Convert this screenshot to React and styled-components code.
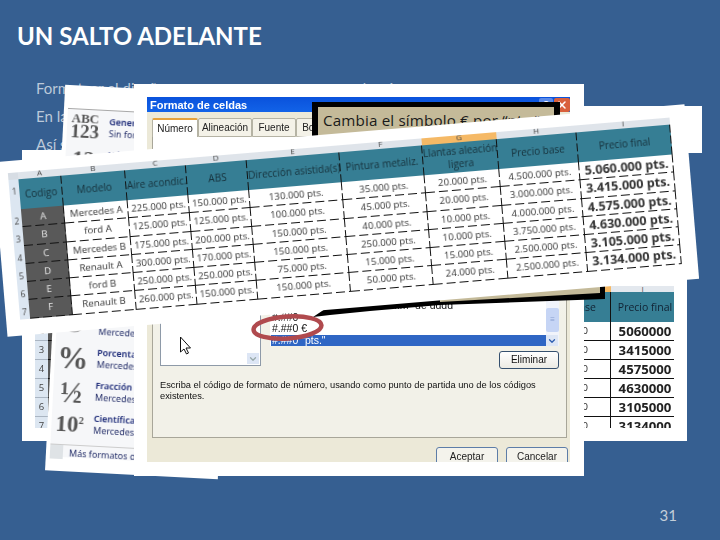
import { Fragment } from 'react';
import { createGlobalStyle, styled } from 'styled-components';
import { ChevronDown, X } from 'lucide-react';

const GlobalStyle = createGlobalStyle`
  html, body {
    margin: 0;
    padding: 0;
  }
  body {
    width: 720px;
    height: 540px;
    overflow: hidden;
    background: #365f91;
  }
`;

const Slide = styled.div`
  position: relative;
  width: 720px;
  height: 540px;
  overflow: hidden;
  background: #365f91;
  font-family: Lato, "Open Sans", sans-serif;
`;

const SlideTitle = styled.h1`
  margin: 0;
  padding: 22px 0 0 17px;
  height: 32px;
  font-size: 24px;
  line-height: 28px;
  font-weight: 700;
  color: #fff;
`;

const BodyText = styled.div`
  display: flex;
  flex-direction: column;
  gap: 8px;
  padding: 24px 0 0 36px;
`;

const BodyLine = styled.div`
  height: 20px;
  font-size: 15px;
  line-height: 20px;
  color: #bcc9d9;
  white-space: nowrap;
`;

const GapWord = styled.span`
  margin-left: 192px;
`;

const PageNumber = styled.div`
  position: absolute;
  right: 43px;
  bottom: 15px;
  font-size: 15px;
  line-height: 20px;
  color: #c3ced9;
`;

/* sheet behind everything, only its two ends show */
const BackSheet = styled.div`
  position: absolute;
  left: 22px;
  top: 150px;
  width: 665px;
  height: 291px;
  box-sizing: border-box;
  padding: 136px 13px 13px 13px;
  background: #fff;
  overflow: hidden;
  font-family: "Open Sans", sans-serif;
`;

const BackGrid = styled.div`
  display: grid;
  grid-template-columns: 13px 40px 1fr 91px 63px;
  grid-template-rows: 6px 30px;
  grid-auto-rows: 19px;
  height: 142px;
  overflow: hidden;
  filter: blur(0.35px);
`;

const BackLetter = styled.div`
  background: ${(p) => (p.$active ? '#f5b966' : '#e3e8ee')};
  font-size: 8px;
  line-height: 5px;
  text-align: center;
  color: #555;
  overflow: hidden;
`;

const BackHead = styled.div`
  background: ${(p) => (p.$blank ? '#dce6f1' : '#367e94')};
  color: #123;
  font-size: 10.5px;
  line-height: 30px;
  white-space: nowrap;
  text-align: ${(p) => p.$align || 'center'};
  padding-right: ${(p) => p.$pad || 0}px;
  padding-left: ${(p) => p.$left || 0}px;
  border-right: ${(p) => (p.$line ? '1px solid #111' : '0')};
`;

const BackRowNum = styled.div`
  background: #dce6f1;
  border-bottom: 1px solid #aab5c2;
  font-size: 9.5px;
  line-height: 18px;
  text-align: center;
  color: #444;
`;

const BackCell = styled.div`
  background: ${(p) => (p.$dark ? '#595959' : '#fff')};
  border-bottom: 1px solid #111;
  border-right: ${(p) => (p.$line ? '1px solid #111' : '0')};
  font-size: ${(p) => (p.$bold ? '13.2px' : '9.5px')};
  font-weight: ${(p) => (p.$bold ? 700 : 400)};
  line-height: 18px;
  color: #222;
  text-align: ${(p) => p.$align || 'center'};
  padding-right: ${(p) => p.$pad || 0}px;
  padding-left: ${(p) => p.$left || 0}px;
`;

/* number format dropdown from the ribbon */
const MenuPanel = styled.div`
  position: absolute;
  left: 55px;
  top: 89px;
  width: 173px;
  height: 386px;
  box-sizing: border-box;
  padding: 23px 8px 15px 4px;
  background: #fff;
  transform: rotate(3deg);
  font-family: "Noto Sans", sans-serif;
`;

const MenuList = styled.div`
  display: flex;
  flex-direction: column;
  height: 100%;
  background: #f6f7f9;
  border-top: 1px solid #a8a8a8;
  filter: blur(0.35px);
`;

const MenuItem = styled.div`
  display: flex;
  align-items: center;
  gap: 8px;
  height: 33px;
  flex-shrink: 0;
  padding-left: 2px;
`;

const MenuIcon = styled.div`
  width: 32px;
  flex-shrink: 0;
  padding-top: ${(p) => p.$drop || 0}px;
  text-align: center;
  font-family: "Liberation Serif", serif;
  font-weight: 700;
  color: #555;
  font-size: ${(p) => p.$size || 30}px;
  line-height: 0.85;
  white-space: nowrap;
  sup {
    font-size: 0.45em;
    vertical-align: 0.8em;
    line-height: 0;
  }
`;

const MenuText = styled.div`
  font-size: 9px;
  line-height: 12px;
  color: #26306a;
  white-space: nowrap;
  b {
    display: block;
    font-weight: 600;
    color: #1c2a78;
  }
`;

const MoreFormats = styled.div`
  display: flex;
  align-items: center;
  gap: 6px;
  margin-top: 5px;
  height: 20px;
  border-top: 1px solid #ccc;
  font-size: 9px;
  color: #26306a;
  white-space: nowrap;
`;

const MoreIcon = styled.div`
  width: 13px;
  height: 14px;
  background: #dfe3e6;
`;

/* Formato de celdas window */
const DialogPanel = styled.div`
  position: absolute;
  left: 134px;
  top: 84px;
  width: 450px;
  height: 392px;
  box-sizing: border-box;
  padding: 13px 14px 14px 13px;
  background: #fff;
  font-family: "Liberation Sans", sans-serif;
`;

const Dialog = styled.div`
  display: flex;
  flex-direction: column;
  height: 100%;
  background: #ece9d8;
  overflow: hidden;
  filter: blur(0.3px);
`;

const TitleBar = styled.div`
  display: flex;
  align-items: center;
  justify-content: space-between;
  height: 15px;
  flex-shrink: 0;
  padding-left: 3px;
  background: linear-gradient(#0a52dc, #1263e8);
  color: #fff;
  font-size: 11px;
  font-weight: 700;
`;

const WindowButtons = styled.div`
  display: flex;
  gap: 1px;
`;

const WindowButton = styled.div`
  display: flex;
  align-items: center;
  justify-content: center;
  width: ${(p) => (p.$close ? 16 : 14)}px;
  height: 14px;
  border-radius: 2px;
  background: ${(p) => (p.$close ? '#d9603c' : '#5b8ae8')};
  color: #fff;
`;

const TabRow = styled.div`
  display: flex;
  height: 19px;
  padding: 6px 0 0 5px;
  flex-shrink: 0;
`;

const Tab = styled.div`
  width: ${(p) => p.$w}px;
  box-sizing: border-box;
  text-align: center;
  font-size: 10px;
  line-height: 18px;
  color: #222;
  background: ${(p) => (p.$active ? '#fff' : '#f4f2e8')};
  border: 1px solid #b5b3a4;
  border-bottom: ${(p) => (p.$active ? '0' : '1px solid #b5b3a4')};
  border-top: ${(p) => (p.$active ? '2px solid #e6a23c' : '1px solid #b5b3a4')};
  border-radius: 2px 2px 0 0;
`;

const TabPane = styled.div`
  display: flex;
  flex-direction: column;
  justify-content: flex-end;
  height: 301px;
  flex-shrink: 0;
  box-sizing: border-box;
  margin: 0 3px 0 5px;
  padding: 0 7px 35px 7px;
  background: linear-gradient(#fff 20%, #f2f1e8 60%);
  border: 1px solid #a8a699;
  border-top: 0;
`;

const PaneRow = styled.div`
  display: flex;
  align-items: flex-start;
  gap: 9px;
`;

const CategoryList = styled.div`
  display: flex;
  align-items: flex-end;
  justify-content: flex-end;
  width: 101px;
  height: 140px;
  flex-shrink: 0;
  box-sizing: border-box;
  background: #fff;
  border: 1px solid #8e9aa8;
  padding: 0 1px 1px 0;
`;

const ArrowBox = styled.div`
  display: flex;
  align-items: center;
  justify-content: center;
  width: 12px;
  height: 11px;
  background: #dde6f5;
  color: ${(p) => p.$color || '#9aa'};
`;

const RightColumn = styled.div`
  display: flex;
  flex-direction: column;
  align-items: flex-end;
  gap: 5px;
  width: 290px;
`;

const FormatList = styled.div`
  display: flex;
  width: 100%;
  height: 120px;
  background: #fff;
`;

const FormatRows = styled.div`
  flex: 1;
  display: flex;
  flex-direction: column;
  justify-content: flex-end;
  min-width: 0;
  padding-left: 1px;
`;

const FormatRow = styled.div`
  height: 11.5px;
  font-size: 10.5px;
  line-height: 11px;
  padding-left: 1px;
  white-space: nowrap;
  overflow: hidden;
  color: ${(p) => (p.$selected ? '#fff' : '#111')};
  background: ${(p) => (p.$selected ? '#2f66c4' : 'transparent')};
`;

const ScrollBar = styled.div`
  display: flex;
  flex-direction: column;
  justify-content: flex-end;
  gap: 3px;
  width: 13px;
  background: #f1f4fb;
`;

const ScrollThumb = styled.div`
  display: flex;
  align-items: center;
  justify-content: center;
  height: 24px;
  background: #c6d5f5;
  color: #8aa0d0;
  font-size: 8px;
  line-height: 1;
  border-radius: 2px;
`;

const DeleteButton = styled.div`
  width: 60px;
  height: 18px;
  box-sizing: border-box;
  border: 1px solid #35506e;
  border-radius: 3px;
  background: linear-gradient(#fff, #ecebe4);
  font-size: 10px;
  line-height: 16px;
  text-align: center;
  color: #111;
`;

const HelpText = styled.p`
  margin: 11px 0 0;
  font-size: 9.3px;
  line-height: 11px;
  white-space: nowrap;
  color: #111;
`;

const DialogFooter = styled.div`
  display: flex;
  justify-content: flex-end;
  gap: 8px;
  padding: 9px 2px 0 0;
`;

const FooterButton = styled.div`
  width: 62px;
  height: 20px;
  box-sizing: border-box;
  border: 1px solid #5d7da8;
  border-radius: 3px;
  background: #f4f3ec;
  font-size: 10px;
  line-height: 17px;
  text-align: center;
  color: #222;
`;

const WhitePatch = styled.div`
  position: absolute;
  left: 584px;
  top: 106px;
  width: 118px;
  height: 47px;
  background: #fff;
`;

const Callout = styled.div`
  position: absolute;
  left: 312px;
  top: 102px;
  width: 248px;
  height: 60px;
  box-sizing: border-box;
  border: 6px solid #000;
  border-top-width: 5px;
  padding: 3px 0 0 5px;
  background: #c4ba99;
  font-family: "Open Sans", sans-serif;
  font-size: 15.2px;
  line-height: 20px;
  letter-spacing: 0.15px;
  color: #1a1a1a;
  white-space: nowrap;
  overflow: hidden;
`;

const Marks = styled.svg`
  position: absolute;
  left: 0;
  top: 0;
`;

/* the tilted table on top */
const TiltedSheet = styled.div`
  position: absolute;
  left: -1px;
  top: 133px;
  width: 694px;
  height: 175px;
  box-sizing: border-box;
  padding: 12px 0 0 14px;
  background: #fff;
  transform: rotate(-4.8deg);
  font-family: "Open Sans", sans-serif;
`;

const TiltedGrid = styled.div`
  display: grid;
  grid-template-columns: 10px 43px 64px 61px 61px 93px 83px 75px 80px 94px;
  grid-template-rows: 7px 30px repeat(6, 18.3px);
  width: 664px;
  filter: blur(0.35px);
`;

const ColLetter = styled.div`
  background: ${(p) => (p.$active ? '#f5b966' : '#dfe4ea')};
  font-size: 8px;
  line-height: 4px;
  text-align: center;
  color: #444;
  overflow: hidden;
`;

const dashRight =
  'repeating-linear-gradient(180deg,#111 0 8px,transparent 8px 11px)';
const dashBottom =
  'repeating-linear-gradient(90deg,#111 0 9px,transparent 9px 13px)';

const HeadCell = styled.div`
  display: flex;
  align-items: center;
  justify-content: center;
  text-align: center;
  background-color: #367e94;
  background-image: ${dashRight};
  background-size: 1px 100%;
  background-position: right top;
  background-repeat: no-repeat;
  color: #16303a;
  font-size: 10px;
  line-height: 13px;
  white-space: pre-line;
`;

const RowNum = styled.div`
  background: #dce6f1;
  font-size: 8.5px;
  line-height: 24px;
  text-align: center;
  color: #444;
`;

const Corner = styled.div`
  background: #d7dde4;
`;

const DataCell = styled.div`
  background-color: ${(p) => (p.$dark ? '#595959' : '#fff')};
  background-image: ${dashBottom}, ${dashRight};
  background-size: 100% 1px, 1px 100%;
  background-position: left bottom, right top;
  background-repeat: no-repeat;
  color: ${(p) => (p.$dark ? '#e8e8e8' : '#333')};
  font-size: ${(p) => (p.$bold ? '12.6px' : '9.7px')};
  font-weight: ${(p) => (p.$bold ? 700 : 400)};
  line-height: 18px;
  text-align: center;
  white-space: nowrap;
`;

const tiltedHead = [
  'Codigo',
  'Modelo',
  'Aire acondic.',
  'ABS',
  'Dirección asistida(s)',
  'Pintura metaliz.',
  'Llantas aleación\nligera',
  'Precio base',
  'Precio final',
];

const tiltedRows = [
  ['A', 'Mercedes A', '225.000', '150.000', '130.000', '35.000', '20.000', '4.500.000', '5.060.000'],
  ['B', 'ford A', '125.000', '125.000', '100.000', '45.000', '20.000', '3.000.000', '3.415.000'],
  ['C', 'Mercedes B', '175.000', '200.000', '150.000', '40.000', '10.000', '4.000.000', '4.575.000'],
  ['D', 'Renault A', '300.000', '170.000', '150.000', '250.000', '10.000', '3.750.000', '4.630.000'],
  ['E', 'ford B', '250.000', '250.000', '75.000', '15.000', '15.000', '2.500.000', '3.105.000'],
  ['F', 'Renault B', '260.000', '150.000', '150.000', '50.000', '24.000', '2.500.000', '3.134.000'],
];

const backRows = [
  ['4500000', '5060000'],
  ['3000000', '3415000'],
  ['4000000', '4575000'],
  ['3750000', '4630000'],
  ['2500000', '3105000'],
  ['2500000', '3134000'],
];

const menuItems = [
  { icon: 'ABC', size: 13, name: 'General', sub: 'Sin formato específico' },
  { icon: '12', size: 22, name: 'Número', sub: 'Mercedes A' },
  { icon: '$', size: 26, name: 'Moneda', sub: 'Mercedes A' },
  { icon: '$', size: 26, name: 'Contabilidad', sub: 'Mercedes A' },
  { icon: '', size: 20, name: 'Fecha corta', sub: 'Mercedes A' },
  { icon: '', size: 20, name: 'Fecha larga', sub: 'Mercedes A' },
  { clock: true, name: 'Hora', sub: 'Mercedes A' },
  { icon: '%', size: 31, drop: 4, name: 'Porcentaje', sub: 'Mercedes A' },
  { icon: '½', size: 29, drop: 6, name: 'Fracción', sub: 'Mercedes A' },
  { sci: true, size: 23, drop: 2, name: 'Científica', sub: 'Mercedes A' },
];

const MenuGlyph = ({ item }) => {
  if (item.clock) {
    return (
      <svg width="24" height="14" viewBox="0 0 24 14">
        <path d="M2 1 A10 10 0 0 0 22 1" fill="#eceef0" stroke="#8b8b8b" strokeWidth="1.2" />
        <path d="M6 6 L7 7 M12 9 L12 10 M18 6 L17 7" stroke="#777" />
      </svg>
    );
  }
  if (item.sci) {
    return (
      <>
        10<sup>2</sup>
      </>
    );
  }
  if (item.icon === 'ABC') {
    return (
      <>
        ABC
        <br />
        <span style={{ fontSize: 19 }}>123</span>
      </>
    );
  }
  return item.icon;
};

const App = () => {
  return (
    <Slide>
      <GlobalStyle />
      <SlideTitle>UN SALTO ADELANTE</SlideTitle>
      <BodyText>
        <BodyLine>
          Formatear el diseño<GapWord>de número</GapWord>
        </BodyLine>
        <BodyLine>En la</BodyLine>
        <BodyLine>Así se</BodyLine>
      </BodyText>
      <PageNumber>31</PageNumber>

      <BackSheet>
        <BackGrid>
          <BackLetter />
          <BackLetter />
          <BackLetter />
          <BackLetter $active>H</BackLetter>
          <BackLetter>I</BackLetter>
          <BackHead $blank>1</BackHead>
          <BackHead />
          <BackHead />
          <BackHead $align="right" $pad={14} $line>
            Precio base
          </BackHead>
          <BackHead $left={5}>Precio final</BackHead>
          {backRows.map((row, i) => (
            <Fragment key={i}>
              <BackRowNum>{i + 2}</BackRowNum>
              <BackCell $dark />
              <BackCell />
              <BackCell $align="right" $pad={22} $line>
                {row[0]}
              </BackCell>
              <BackCell $bold $left={5}>
                {row[1]}
              </BackCell>
            </Fragment>
          ))}
        </BackGrid>
      </BackSheet>

      <MenuPanel>
        <MenuList>
          {menuItems.map((item) => (
            <MenuItem key={item.name}>
              <MenuIcon $size={item.size} $drop={item.drop}>
                <MenuGlyph item={item} />
              </MenuIcon>
              <MenuText>
                <b>{item.name}</b>
                {item.sub}
              </MenuText>
            </MenuItem>
          ))}
          <MoreFormats>
            <MoreIcon />
            Más formatos de número...
          </MoreFormats>
        </MenuList>
      </MenuPanel>

      <DialogPanel>
        <Dialog>
          <TitleBar>
            Formato de celdas
            <WindowButtons>
              <WindowButton>?</WindowButton>
              <WindowButton $close>
                <X size={12} strokeWidth={3} />
              </WindowButton>
            </WindowButtons>
          </TitleBar>
          <TabRow>
            <Tab $w={46} $active>
              Número
            </Tab>
            <Tab $w={54}>Alineación</Tab>
            <Tab $w={44}>Fuente</Tab>
            <Tab $w={44}>Bordes</Tab>
          </TabRow>
          <TabPane>
            <PaneRow>
              <CategoryList>
                <ArrowBox>
                  <ChevronDown size={10} strokeWidth={3} />
                </ArrowBox>
              </CategoryList>
              <RightColumn>
                <FormatList>
                  <FormatRows>
                    <FormatRow>[$-C0A]dddd, dd" de "mmmm" de dddd</FormatRow>
                    <FormatRow>#.##0</FormatRow>
                    <FormatRow>#.##0 €</FormatRow>
                    <FormatRow $selected>#.##0 "pts."</FormatRow>
                  </FormatRows>
                  <ScrollBar>
                    <ScrollThumb>≡</ScrollThumb>
                    <ArrowBox $color="#2f5fb0">
                      <ChevronDown size={10} strokeWidth={3} />
                    </ArrowBox>
                  </ScrollBar>
                </FormatList>
                <DeleteButton>Eliminar</DeleteButton>
              </RightColumn>
            </PaneRow>
            <HelpText>
              Escriba el código de formato de número, usando como punto de partida uno de los códigos
              <br />
              existentes.
            </HelpText>
          </TabPane>
          <DialogFooter>
            <FooterButton>Aceptar</FooterButton>
            <FooterButton>Cancelar</FooterButton>
          </DialogFooter>
        </Dialog>
      </DialogPanel>

      <WhitePatch />
      <Callout>Cambia el símbolo € por “pts.”</Callout>

      <Marks width="720" height="540" viewBox="0 0 720 540">
        <path d="M313 317 L328 307 L440 290 L600 270 L605 270 L605 299 L440 305 L370 311 L330 315 Z" fill="#000" />
        <path d="M440 302 L600 293 L600 270 L440 270 Z" fill="#c4ba99" />
        <ellipse cx="287.5" cy="327.5" rx="34" ry="11" fill="none" stroke="#b04a4e" strokeWidth="4.5" transform="rotate(-4 287.5 327.5)" />
        <path d="M180.5 337 L180.5 352 L184 349 L186.5 354 L188.5 353 L186 348 L190.5 348 Z" fill="#fff" stroke="#111" strokeWidth="1" />
      </Marks>

      <TiltedSheet>
        <TiltedGrid>
          <Corner />
          {['A', 'B', 'C', 'D', 'E', 'F', 'G', 'H', 'I'].map((c) => (
            <ColLetter key={c} $active={c === 'G'}>
              {c}
            </ColLetter>
          ))}
          <RowNum>1</RowNum>
          {tiltedHead.map((h) => (
            <HeadCell key={h}>{h}</HeadCell>
          ))}
          {tiltedRows.map((row, i) => (
            <Fragment key={row[0]}>
              <RowNum>{i + 2}</RowNum>
              {row.map((val, j) => (
                <DataCell key={j} $dark={j === 0} $bold={j === 8}>
                  {j > 1 ? `${val} pts.` : val}
                </DataCell>
              ))}
            </Fragment>
          ))}
        </TiltedGrid>
      </TiltedSheet>
    </Slide>
  );
};

export default App;
